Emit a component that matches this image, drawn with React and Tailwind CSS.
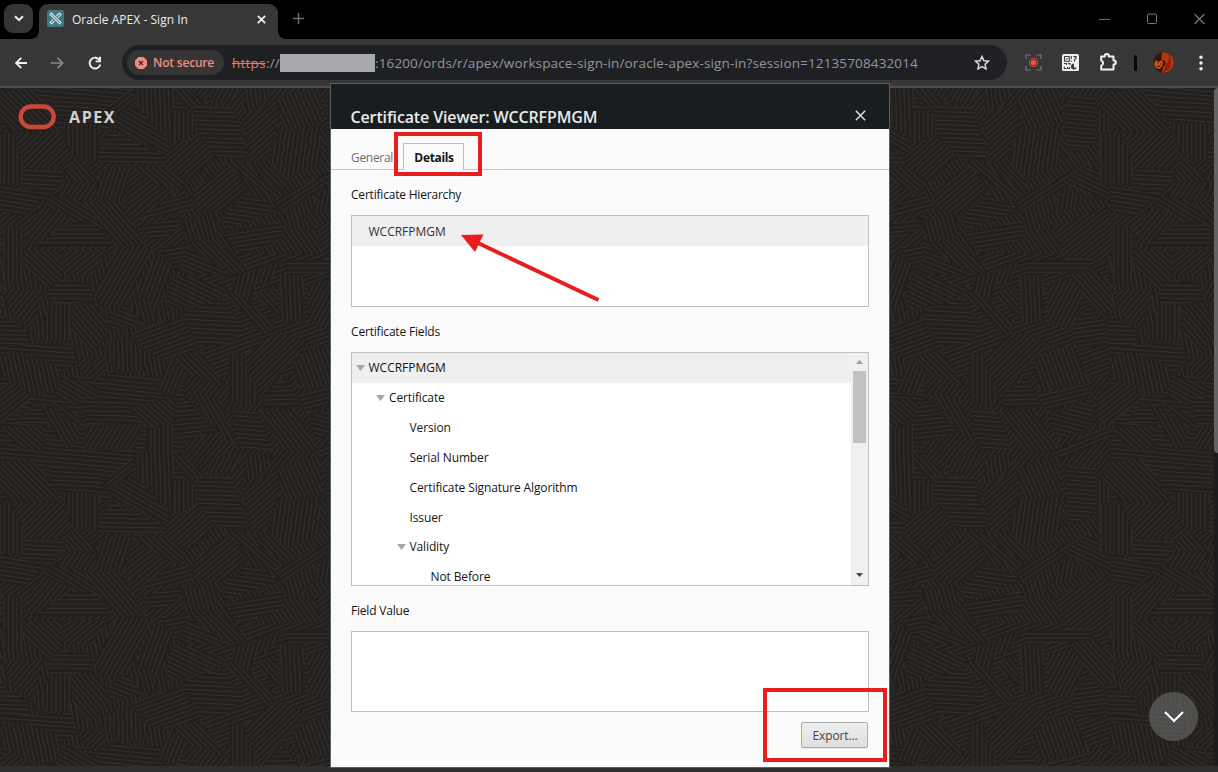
import React from "react";

/* ---------- Hatched backdrop ---------- */

const TILE = 1110;
const PATCHES = [
  [45, "0,-115 90,-125 150,-60 182,2 30,2 -30,-70"],
  [-45, "30,5 182,5 215,75 175,115 72,115 65,80"],
  [90, "-30,10 30,10 68,85 65,165 -30,160"],
  [90, "185,-25 300,-20 290,95 212,70"],
  [3, "150,-102 300,-88 312,-30 150,-35"],
  [-38, "310,-55 400,-130 400,-75 315,-30"],
  [30, "340,-40 400,-75 520,50 500,70 320,-15"],
  [1, "290,100 295,60 330,0 500,80 490,100"],
  [88, "405,-140 520,-150 520,40 480,0 410,-70"],
  [90, "520,-60 580,-50 580,10 525,40"],
  [48, "520,-150 580,-110 625,-75 580,-50 520,-110"],
  [-62, "630,-80 620,-120 740,-150 690,-80"],
  [2, "580,-72 700,-65 720,-20 720,10 740,50 740,90 640,80 600,20 580,-10"],
  [83, "740,-140 820,-130 800,-90 730,-45"],
  [-42, "725,-30 830,-90 840,-30 800,90 750,100 740,20"],
  [66, "830,-90 850,-100 960,-140 965,-15 880,0 860,30"],
  [98, "880,0 960,-10 965,100 900,125 860,150 805,90 840,0"],
  [-42, "500,90 590,10 650,80 560,160"],
  [-40, "575,235 580,180 690,100 745,180 660,250"],
  [42, "660,90 740,100 860,170 840,205 820,210"],
  [46, "755,125 810,95 860,150 850,185"],
  [42, "390,110 500,110 580,165 520,190"],
  [108, "290,120 390,110 370,220 270,200"],
  [-38, "390,130 520,185 500,205 380,240"],
  [3, "70,120 200,125 160,190 60,200"],
  [48, "195,120 225,85 305,155 190,155"],
  [-56, "165,205 190,158 300,158 270,215"],
  [9, "0,155 60,180 170,200 120,215 70,260 0,240"],
  [32, "120,215 160,195 260,215 345,345"],
  [-50, "70,345 120,225 215,262 110,348"],
  [0, "100,350 220,270 290,285 345,348"],
  [49, "250,215 360,215 440,350 350,350"],
  [-15, "410,268 520,195 580,200 585,240"],
  [-5, "420,290 560,255 540,290 500,320 450,330"],
  [74, "545,270 640,250 660,290 640,330 560,335"],
  [8, "660,265 740,190 845,240 680,300"],
  [-9, "665,312 850,272 850,325 720,375"],
  [46, "550,340 640,325 750,420 700,435"],
  [-33, "820,210 1060,90 1000,160 850,242"],
  [74, "850,247 940,190 950,240 905,270 945,300 890,300 855,290"],
  [100, "939,252 969,172 1064,212"],
  [-38, "945,290 1100,225 1120,300 1110,400 990,385 960,350"],
  [90, "8,288 67,292 67,462 10,452"],
  [44, "68,358 182,358 190,440 140,480 68,400"],
  [-40, "190,360 325,358 270,440 190,430"],
  [1, "140,490 180,450 270,460 285,518 150,522"],
  [-60, "350,355 460,355 400,480 390,510 320,540 280,490"],
  [-11, "480,350 570,345 640,410 520,420"],
  [22, "560,350 700,440 530,428"],
  [-70, "470,368 520,400 490,500 440,570 410,480"],
  [26, "520,430 690,470 650,515 500,540 500,480"],
  [3, "540,550 660,505 730,590 690,640 600,650"],
  [104, "700,440 780,420 750,520 720,520 700,470"],
  [110, "760,420 850,390 790,475"],
  [48, "670,490 700,480 830,580 800,620 780,600"],
  [48, "765,495 830,460 835,562"],
  [87, "840,430 910,440 910,580 845,578"],
  [-62, "924,462 1004,442 1034,502 990,600 924,580"],
  [0, "860,392 1060,385 1060,420 860,435"],
  [48, "990,435 1060,410 1130,480 1110,590 1050,520"],
  [-8, "994,602 1044,522 1114,600 1100,650 1000,650"],
  [-50, "0,480 130,480 95,600 40,560"],
  [2, "-10,545 80,600 90,650 -10,650"],
  [90, "150,525 210,525 210,635 100,632"],
  [50, "215,520 290,520 330,600 300,640 270,670 215,600"],
  [20, "320,560 380,520 430,582 330,600"],
  [75, "390,510 440,500 480,580 430,578"],
  [-20, "390,610 540,560 590,650 500,690 440,670"],
  [88, "305,650 380,610 450,690 430,720 370,730 300,680"],
  [4, "0,648 215,640 235,700 180,730 0,670"],
  [78, "0,680 60,665 165,700 190,740 160,790 110,800 0,740"],
  [-38, "-40,790 40,750 100,800 0,880 -40,880"],
  [30, "190,735 300,770 270,830 160,800"],
  [-45, "230,690 310,680 320,720 290,760 240,720"],
  [6, "330,720 480,770 500,790 340,810 300,790"],
  [112, "510,690 560,720 530,800 470,780"],
  [45, "520,680 600,660 680,770 560,730"],
  [90, "690,670 745,670 780,830 690,820"],
  [-44, "730,680 830,600 930,640 780,790 740,720"],
  [70, "880,700 940,650 1000,650 1050,760 900,780"],
  [-2, "790,790 860,740 890,790 900,830 790,835"],
  [42, "380,835 520,800 545,840 520,880 440,890"],
  [1, "240,800 360,810 380,850 400,880 260,885"],
  [60, "110,810 160,840 250,900 200,960 150,890"],
  [38, "150,810 230,850 260,890 240,900"],
  [0, "40,880 110,810 150,880"],
  [42, "0,890 140,885 130,960 60,960"],
  [-58, "260,890 430,880 400,960 250,960"],
  [90, "440,900 520,880 520,960 440,1000"],
  [60, "570,780 660,810 710,950 650,900"],
  [-6, "520,850 560,800 650,905 540,940"],
  [5, "690,840 770,850 820,960 720,960"],
  [52, "780,840 880,835 960,965 850,960"],
  [-14, "890,800 1040,760 1060,790 920,850"],
  [14, "930,860 1060,800 1060,890 950,930"],
  [90, "1070,810 1110,820 1110,905 1070,905"],
  [-22, "930,965 1100,890 1115,920 960,990"],
  [5, "974,-100 1070,-95 1070,40 980,80"],
  [90, "1075,-65 1108,-65 1108,90 1078,95"],
  [25, "964,160 1044,100 1174,190 1150,230"],
];
const BASE = [
  [-40, "0,0 555,0 555,370 0,370"],
  [55, "555,0 1110,0 1110,370 555,370"],
  [80, "0,370 555,370 555,740 0,740"],
  [-20, "555,370 1110,370 1110,740 555,740"],
  [5, "0,740 555,740 555,1110 0,1110"],
  [-50, "555,740 1110,740 1110,1110 555,1110"],
];

/* Parallel strokes at `deg`, cut to the outline of a polygon. */
function hatch(deg, points) {
  const a = (deg * Math.PI) / 180;
  const c = Math.cos(a);
  const s = Math.sin(a);
  const pts = points.split(" ").map((p) => {
    const [x, y] = p.split(",").map(Number);
    return [x * c + y * s, -x * s + y * c];
  });
  const ys = pts.map((p) => p[1]);
  let d = "";
  for (let y = Math.min(...ys) + 3; y < Math.max(...ys); y += 13) {
    const xs = [];
    pts.forEach(([x1, y1], i) => {
      const [x2, y2] = pts[(i + 1) % pts.length];
      if (y1 <= y !== y2 <= y) xs.push(x1 + ((y - y1) / (y2 - y1)) * (x2 - x1));
    });
    xs.sort((p, q) => p - q);
    for (let i = 0; i + 1 < xs.length; i += 2) {
      const l = xs[i] + 1;
      const r = xs[i + 1] - 1;
      if (r - l > 4) d += `M${(l * c - y * s).toFixed(1)} ${(l * s + y * c).toFixed(1)}L${(r * c - y * s).toFixed(1)} ${(r * s + y * c).toFixed(1)}`;
    }
  }
  return d;
}

function Backdrop() {
  const copies = [];
  for (let y = -1; y < 2; y++) for (let x = -1; x < 4; x++) copies.push([x, y]);
  return (
    <svg className="absolute inset-0 h-full w-full" viewBox="0 0 1218 678" preserveAspectRatio="xMinYMin slice" aria-hidden="true">
      <defs>
        <g id="weave" strokeWidth="4.1" stroke="#2f2e2d">
          {BASE.map(([a, p], i) => <path key={i} d={hatch(a, p)} />)}
          {PATCHES.map(([a, p], i) => (
            <g key={i}>
              <polygon points={p} fill="#231f1c" stroke="none" />
              <path d={hatch(a, p)} />
            </g>
          ))}
        </g>
      </defs>
      <g transform="translate(0 42) scale(0.33333)">
        {copies.map(([x, y]) => <use key={x + "," + y} href="#weave" x={x * TILE} y={y * TILE} />)}
      </g>
    </svg>
  );
}

/* ---------- Browser chrome ---------- */

function TabStrip() {
  return (
    <div className="flex h-[39px] shrink-0 bg-black">
      <div className="mt-1 ml-1 flex h-[29px] w-[29px] items-center justify-center rounded-[9px] bg-[#353535]">
        <svg width="10" height="7" viewBox="0 0 10 7" fill="none" stroke="#f0f0f0" strokeWidth="2"><path d="M1 1.2l4 4 4-4" /></svg>
      </div>
      <div className="relative mt-1 ml-[6px] flex h-[35px] w-[239px] items-center rounded-t-[9px] bg-[#373737] pb-[5px]">
        <svg className="absolute bottom-0 -left-2" width="8" height="8"><path d="M8 0v8H0a8 8 0 0 0 8-8z" fill="#373737" /></svg>
        <svg className="absolute -right-2 bottom-0" width="8" height="8"><path d="M0 0v8h8a8 8 0 0 1-8-8z" fill="#373737" /></svg>
        <svg className="mt-[-1px] ml-2" width="17" height="17" viewBox="0 0 17 17">
          <rect width="17" height="17" rx="2" fill="#417783" />
          <g fill="none" stroke="#d5e6e9" strokeWidth="1.1">
            <path d="M3 4.4L4.4 3l9.6 9.6-1.4 1.4zM12.4 3L14 4.6l-3 3M9.3 6.1l3.1-3.1M6.1 9.3L3 12.4 4.6 14l3.1-3.1" />
          </g>
        </svg>
        <span className="mt-px ml-[8px] text-[12px] tracking-[0.03px] text-[#ececec]">Oracle APEX - Sign In</span>
        <svg className="mr-[12px] ml-auto" width="9" height="9" viewBox="0 0 9 9" stroke="#f2f2f2" strokeWidth="1.7"><path d="M.8.8l7.400 7.400M8.200.8L.8 8.200" /></svg>
      </div>
      <svg className="mt-[13px] ml-[15px]" width="11" height="11" viewBox="0 0 11 11" stroke="#6d6d6d" strokeWidth="1.5"><path d="M0 5.5h11M5.5 0v11" /></svg>
      <div className="mt-[13px] mr-[13px] ml-auto flex gap-[37px]">
        <svg width="11" height="12" viewBox="0 0 11 12" stroke="#6f6f6f"><path d="M0 6.5h11" /></svg>
        <svg width="10" height="12" viewBox="0 0 10 12" fill="none" stroke="#7b7b7b"><rect x=".5" y="1" width="9" height="9.5" rx="1" /></svg>
        <svg width="11" height="12" viewBox="0 0 11 12" stroke="#7b7b7b" strokeWidth="1.1"><path d="M.5 1l10 10M10.5 1l-10 10" /></svg>
      </div>
    </div>
  );
}

function Extensions() {
  return (
    <>
      <svg className="ml-[18px]" width="17" height="17" viewBox="0 0 17 17" fill="none">
        <path d="M1 5V1h4.500M11.500 1H16v4M16 12v4h-4.500M5.500 16H1v-4" stroke="#656565" strokeWidth="1.700" />
        <circle cx="8.500" cy="8.500" r="4" stroke="#d84a3e" strokeWidth="1.100" />
        <circle cx="8.500" cy="8.500" r="2.600" fill="#ef5547" />
      </svg>
      <svg className="ml-[20px]" width="17" height="17" viewBox="0 0 17 17">
        <rect width="17" height="17" rx="1.500" fill="#efefef" />
        <g fill="none" stroke="#3b3b3b" strokeWidth="1.100">
          <path d="M2.500 2.500h4.800v4.800H2.500zM4.200 4.900h1.600M9.300 2v3M9.300 6.500v1.200M11.300 2.500h2v1.200M14 2v2.500l-1.500 1v2M2 9.500h2.500v1.500M6 9.500h2v1.500M2.300 12.500v2h2M5.500 13v1.500h2V13" />
        </g>
        <path d="M12 9.500a3 3 0 1 0 2.800 4H12z" fill="#3b3b3b" />
      </svg>
      <svg className="mt-[-2px] ml-[20px]" width="19" height="18" viewBox="0 0 19 18">
        <path d="M2.200 3.400h3.600V3a2 2 0 0 1 4 0v.4h4.700v4.200h.3a2 2 0 0 1 0 4h-.3v5H2.200v-4a2.600 2.600 0 0 0 0-5z" fill="none" stroke="#f2f2f2" strokeWidth="2" strokeLinejoin="round" />
      </svg>
      <div className="ml-[16px] h-4 w-[2.500px] rounded bg-[#080808]" />
      <svg className="ml-[16px]" width="21" height="21" viewBox="0 0 21 21">
        <defs><clipPath id="avatar"><circle cx="10.500" cy="10.500" r="10.300" /></clipPath></defs>
        <g clipPath="url(#avatar)">
          <rect width="21" height="21" fill="#3a160c" />
          <path d="M9 0l9-1 4 6-1 9-5 8-7-1 1-6 3-3-2-4-3 1z" fill="#b23808" />
          <path d="M14 1c3 3 2 8 0 11s-3 5-3 8l4-2c4-5 4-14-1-17z" fill="#8b1f08" />
          <path d="M3 8l3 2 3-2 1 4-3 5-4-1-2-4z" fill="#d05414" />
          <path d="M4 11h1.500M7 12h1.500M4 14l3 .5" stroke="#30120b" strokeWidth="1.200" />
          <path d="M2 2l5 1 2 4-4 2-4-2z" fill="#2c1712" />
        </g>
      </svg>
      <svg className="ml-[25px]" width="4" height="16" viewBox="0 0 4 16" fill="#f4f4f4"><circle cx="2" cy="2.200" r="1.700" /><circle cx="2" cy="8" r="1.700" /><circle cx="2" cy="13.800" r="1.700" /></svg>
    </>
  );
}

function Toolbar() {
  return (
    <div className="flex h-[47px] shrink-0 items-center bg-[#373737]">
      <svg className="ml-[15px]" width="12" height="12" viewBox="0 0 12 12" fill="none" stroke="#f2f2f2" strokeWidth="1.800"><path d="M12 6H1.200M6.300.8L1.100 6l5.200 5.200" /></svg>
      <svg className="ml-[24px]" width="13" height="12" viewBox="0 0 13 12" fill="none" stroke="#8a8a8a" strokeWidth="1.700"><path d="M0 6h11.500M6.500.8L11.700 6l-5.200 5.200" /></svg>
      <svg className="ml-[24px]" width="14" height="14" viewBox="0 0 14 14"><path d="M11.700 4.300A5.400 5.400 0 1 0 12.300 8.400" fill="none" stroke="#f2f2f2" strokeWidth="1.900" /><path d="M13 .8v5.400H7.600V4.400h3.500V.8z" fill="#f2f2f2" /></svg>
      <div className="ml-[20px] flex h-[35px] w-[885px] items-center rounded-full bg-[#1f2024]">
        <div className="ml-[5px] flex h-[25px] w-[97px] items-center rounded-full bg-[#353536]">
          <svg className="ml-2" width="12" height="12" viewBox="0 0 12 12"><path d="M3.500 0h5L12 3.500v5L8.500 12h-5L0 8.500v-5z" fill="#f28b82" stroke="#f28b82" strokeLinejoin="round" strokeWidth=".1" /><path d="M4 4l4 4M8 4L4 8" stroke="#333" strokeWidth="1.400" /></svg>
          <span className="mt-px ml-[6px] text-[12px] font-semibold tracking-[-0.2px] whitespace-nowrap text-[#f28b82]">Not secure</span>
        </div>
        <div className="mt-px ml-[8px] flex items-center text-[13.5px] tracking-[0.14px] whitespace-nowrap text-[#94979b]">
          <span className="w-[34px] tracking-[0.2px] text-[#e8776d] line-through">https</span>
          <span className="w-[14px]">://</span>
          <span className="h-[18px] w-[95px] bg-[#a9a9ad]" />
          <span>:16200/ords/r/apex/workspace-sign-in/oracle-apex-sign-in?session=12135708432014</span>
        </div>
        <svg className="mr-[17px] ml-auto" width="16" height="16" viewBox="0 0 16 16" fill="none" stroke="#dedede" strokeWidth="1.500"><path d="M8 1.500l1.900 4.200 4.600.5-3.400 3.100.9 4.500L8 11.500l-4 2.300.9-4.500L1.500 6.200l4.600-.5z" /></svg>
      </div>
      <Extensions />
    </div>
  );
}

/* ---------- Certificate dialog ---------- */

const FIELDS = [
  ["WCCRFPMGM", "bg-[#efefef] pl-[3.500px] tracking-[0px]", true],
  ["Certificate", "pl-[24px]", true],
  ["Version", "pl-[44.500px]", false],
  ["Serial Number", "pl-[44.500px]", false],
  ["Certificate Signature Algorithm", "pl-[44.500px]", false],
  ["Issuer", "pl-[44.500px]", false],
  ["Validity", "pl-[44.500px]", true],
  ["Not Before", "pl-[65.500px]", false],
];

function Field({ label, look, open }) {
  return (
    <div className={`flex h-[29.85px] shrink-0 items-center ${look}`}>
      <span className="flex w-[13px] shrink-0">
        {open && <svg width="9" height="6" viewBox="0 0 9 6"><path d="M0 0h9L4.500 6z" fill="#a6a6a6" /></svg>}
      </span>
      <span className="mt-px whitespace-nowrap">{label}</span>
    </div>
  );
}

function CertificateDialog() {
  return (
    <div className="absolute top-[83px] left-[330px] flex h-[685px] w-[560px] flex-col border border-[#566063] bg-[#fbfbfb] text-[12px] leading-4 tracking-[-0.12px] text-[#151515]">
      <div className="flex h-[45px] shrink-0 items-center bg-[#181d1f] pt-[20px] pr-[23px] pl-[19.500px]">
        <span className="text-[16px] font-semibold tracking-[-0.13px] text-[#e9ebec]">Certificate Viewer: WCCRFPMGM</span>
        <svg className="mt-[-2px] ml-auto" width="11" height="11" viewBox="0 0 11 11" stroke="#dedede" strokeWidth="1.500"><path d="M.8.8l9.400 9.400M10.200.8L.8 10.200" /></svg>
      </div>
      <div className="flex h-[41px] shrink-0 items-end border-b border-[#c3c3c3] pl-5">
        <span className="mb-[3px] w-[52px] tracking-[-0.3px] text-[#6f6f6f]">General</span>
        <span className="-mb-px flex h-[27px] w-[61px] items-center justify-center border border-b-0 border-[#c0c0c0] bg-[#fbfbfb] pt-px pl-px font-bold tracking-[-0.35px]">Details</span>
      </div>
      <div className="flex flex-col px-5">
        <p className="mt-[17px] tracking-[-0.2px]">Certificate Hierarchy</p>
        <div className="mt-[12px] h-[92px] border border-[#c0c0c0] bg-white">
          <div className="flex h-[30px] items-center bg-[#efefef] pt-px pl-[16.500px] tracking-[0px] text-[#333]">WCCRFPMGM</div>
        </div>
        <p className="mt-[17px] tracking-[-0.18px]">Certificate Fields</p>
        <div className="mt-[12px] flex h-[234px] overflow-hidden border border-[#c0c0c0] bg-white">
          <div className="flex grow flex-col overflow-hidden">
            {FIELDS.map(([label, look, open]) => <Field key={label} label={label} look={look} open={open} />)}
          </div>
          <div className="flex w-[17px] flex-col items-center bg-[#f0f0f0]">
            <svg className="mt-[7px]" width="7" height="4" viewBox="0 0 7 4"><path d="M0 4h7L3.500 0z" fill="#9c9c9c" /></svg>
            <div className="mt-[7px] h-[72px] w-[13px] bg-[#c1c1c1]" />
            <svg className="mt-auto mb-[8px]" width="7" height="4" viewBox="0 0 7 4"><path d="M0 0h7L3.500 4z" fill="#484848" /></svg>
          </div>
        </div>
        <p className="mt-[17px] tracking-[-0.2px]">Field Value</p>
        <div className="mt-[12px] h-[81px] border border-[#c0c0c0] bg-white" />
        <button className="mt-[10px] mr-px h-[26px] w-[67px] self-end rounded-[2px] border border-[#ababab] bg-linear-to-b from-[#efefef] to-[#dedede] pt-px pl-px text-[#444] shadow-[0_1px_0_rgba(0,0,0,0.08)]">Export...</button>
      </div>
    </div>
  );
}

function Annotations() {
  return (
    <>
      <div className="absolute top-[132px] left-[394px] h-[44px] w-[88px] border-4 border-[#e81e1e]" />
      <svg className="absolute top-[230px] left-[458px]" width="145" height="75" viewBox="458 230 145 75">
        <path d="M478 243l120.500 57" stroke="#e81e1e" strokeWidth="4" />
        <path d="M461 235l22.500-.500-8.500 17.500z" fill="#e81e1e" />
      </svg>
      <div className="absolute top-[688px] left-[763px] h-[74px] w-[124px] border-4 border-[#e81e1e]" />
    </>
  );
}

export default function App() {
  return (
    <div className="relative flex h-[772px] w-[1218px] flex-col overflow-hidden bg-[#2f2f2f] font-['Open_Sans','Noto_Sans',sans-serif]">
      <TabStrip />
      <Toolbar />
      <div className="h-[2px] shrink-0 bg-[#4e4e4d]" />
      <main className="relative flex h-[678px] shrink-0 justify-between bg-[#231f1c]">
        <Backdrop />
        <div className="relative flex h-[57px] items-center pl-[18px]">
          <svg width="38" height="26" viewBox="0 0 38 26"><rect x="2.700" y="2.500" width="33" height="20.500" rx="10.200" fill="none" stroke="#c94837" strokeWidth="4.400" /></svg>
          <span className="ml-[13px] text-[16px] font-bold tracking-[1.600px] text-[#d4d2d0]">APEX</span>
        </div>
        <div className="relative flex">
          <button className="mr-[16px] mb-[25px] flex h-[49px] w-[49px] items-center justify-center self-end rounded-full bg-[#6d6c6b]/60">
            <svg className="mt-px" width="20" height="12" viewBox="0 0 20 12" fill="none" stroke="#fff" strokeWidth="2.200"><path d="M1 1l9 9 9-9" /></svg>
          </button>
          <div className="h-full w-[4px] bg-[#1c1c1c]"><div className="h-[365px] rounded-l bg-[#656361]" /></div>
        </div>
      </main>
      <CertificateDialog />
      <Annotations />
    </div>
  );
}
